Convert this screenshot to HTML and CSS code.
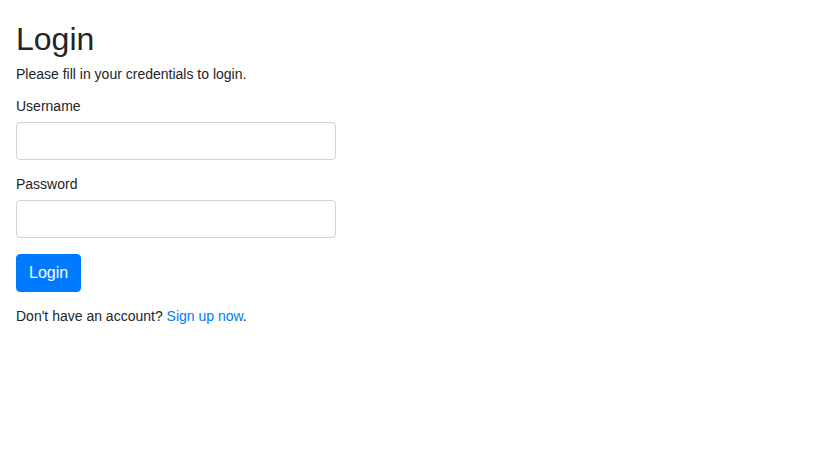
FILE: index.html
```html
<!DOCTYPE html>
<html lang="en">
<head>
<meta charset="UTF-8">
<title>Login</title>
<link rel="stylesheet" href="styles.css">
</head>
<body>
<div class="wrapper">
  <h2 class="title">Login</h2>
  <p class="lead-text">Please fill in your credentials to login.</p>
  <form class="login-form">
    <div class="form-group">
      <label class="form-label">Username</label>
      <input type="text" class="form-control">
    </div>
    <div class="form-group">
      <label class="form-label">Password</label>
      <input type="password" class="form-control">
    </div>
    <div class="form-group">
      <button type="button" class="btn-primary">Login</button>
    </div>
    <p class="signup">Don't have an account? <a class="link" href="#">Sign up now</a>.</p>
  </form>
</div>
</body>
</html>
```
FILE: styles.css
```css
html { font-size: 16px; }
body {
  margin: 0;
  font: 14px "Liberation Sans", Arial, sans-serif;
  color: #212529;
  background: #fff;
}
.wrapper {
  width: 320px;
  padding: 20px 16px;
}
.title {
  margin: 0 0 8px;
  font-size: 32px;
  font-weight: 500;
  line-height: 1.2;
}
.lead-text {
  margin: 0 0 16px;
}
.form-group {
  margin-bottom: 16px;
}
.form-label {
  display: inline-block;
  margin-bottom: 8px;
}
.form-control {
  display: block;
  box-sizing: border-box;
  width: 100%;
  height: 38px;
  padding: 6px 12px;
  font: 16px/1.5 "Liberation Sans", Arial, sans-serif;
  color: #495057;
  background: #fff;
  border: 1px solid #ced4da;
  border-radius: 4px;
  margin: 0;
}
.btn-primary {
  display: inline-block;
  box-sizing: border-box;
  height: 38px;
  padding: 6px 12px;
  font: 16px/1.5 "Liberation Sans", Arial, sans-serif;
  color: #fff;
  background: #007bff;
  border: 1px solid #007bff;
  border-radius: 4px;
  margin: 0;
}
.signup {
  margin: 0 0 16px;
}
.link {
  color: #007bff;
  text-decoration: none;
}
```
